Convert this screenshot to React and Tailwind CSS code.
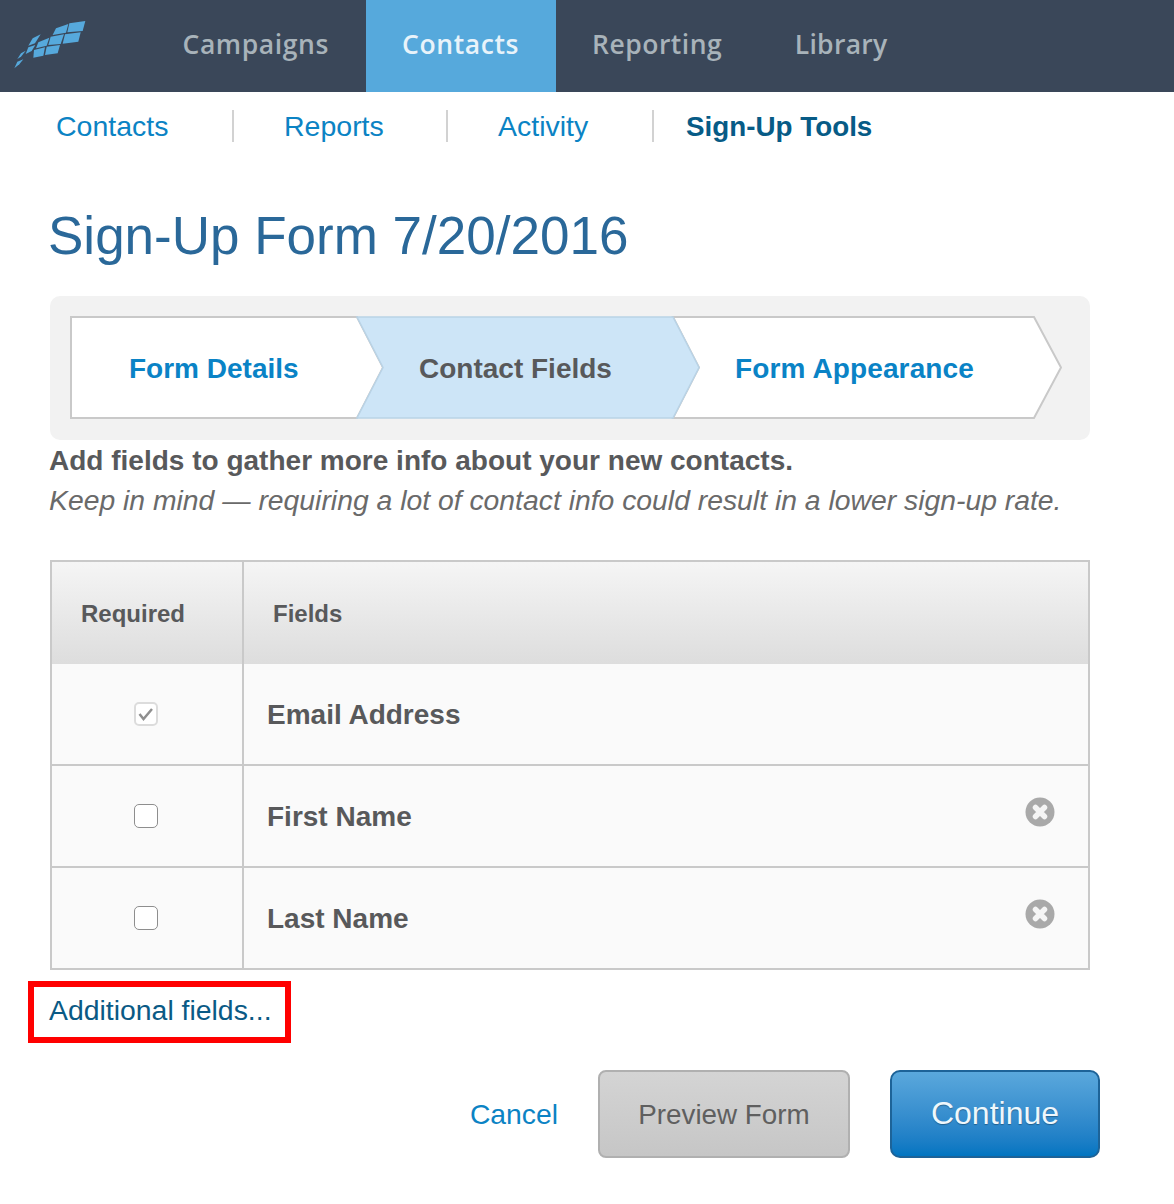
import React from 'react';

const navItems = [
  { name: 'Campaigns', active: false, cls: 'px-[36.5px] tracking-[0.6px]' },
  { name: 'Contacts', active: true, cls: 'px-[36.5px] tracking-[0.6px]' },
  { name: 'Reporting', active: false, cls: 'px-[36.5px] tracking-[0.5px]' },
  { name: 'Library', active: false, cls: 'pl-[36px] pr-[36.5px] tracking-[0.3px]' },
];

const subItems = [
  { name: 'Contacts', width: 'w-[234px]', pad: 'pl-[56px]' },
  { name: 'Reports', width: 'w-[214px]', pad: 'pl-[50px]' },
  { name: 'Activity', width: 'w-[206px]', pad: 'pl-[50px]' },
];

const rows = [
  { name: 'Email Address', checked: true },
  { name: 'First Name' },
  { name: 'Last Name' },
];

const Logo = () => (
  <svg width="80" height="60" viewBox="0 0 240 180" fill="#56a9dc">
    <path d="M178 25 L226 18 L218 48 L172 52 Z" />
    <path d="M138 40 L175 27 L168 53 L128 60 Z" />
    <path d="M165 58 L212 52 L205 80 L158 86 Z" />
    <path d="M122 65 L162 58 L152 87 L115 90 Z" />
    <path d="M110 95 L150 90 L143 115 L105 120 Z" />
    <path d="M85 82 L118 68 L110 92 L78 100 Z" />
    <path d="M72 105 L105 97 L100 122 L70 128 Z" />
    <path d="M68 70 L92 58 L75 85 L55 92 Z" />
    <path d="M55 97 L76 90 L65 108 L47 117 Z" />
    <path d="M33 115 L47 107 L33 125 L22 132 Z" />
    <path d="M22 140 L40 133 L28 148 L13 160 Z" />
  </svg>
);

const RemoveIcon = () => (
  <svg width="30" height="30" viewBox="0 0 30 30">
    <circle cx="15" cy="15" r="14.5" fill="#a9a9a9" />
    <path d="M10.5 10.5 L19.5 19.5 M19.5 10.5 L10.5 19.5" stroke="#f5f5f5" strokeWidth="5.5" strokeLinecap="round" />
  </svg>
);

const Checkbox = ({ checked }) => (
  <span className={`flex items-center justify-center w-6 h-6 rounded-[5px] bg-white ${checked ? 'border-2 border-[#dcdcdc]' : 'border border-[#8e8e8e]'}`}>
    {checked && (
      <svg width="20" height="20" viewBox="0 0 20 20" fill="none">
        <path d="M3.5 10 L7.5 15 L16 5" stroke="#8f8f8f" strokeWidth="2.5" />
      </svg>
    )}
  </span>
);

const Stepper = () => (
  <div className="relative w-[992px] h-[104px]">
    <svg className="absolute inset-0" width="992" height="104" viewBox="0 0 992 104">
      <path d="M1 1 H287 L313 51.5 L287 102 H1 Z" fill="#fff" stroke="#c9c9c9" strokeWidth="2" />
      <path d="M603 1 H964 L991 51.5 L964 102 H603 L629 51.5 Z" fill="#fff" stroke="#c9c9c9" strokeWidth="2" />
      <path d="M287 1 H603 L629 51.5 L603 102 H287 L313 51.5 Z" fill="#cde5f7" stroke="#b9d3e6" strokeWidth="1.5" />
    </svg>
    <div className="relative flex items-center h-full pt-[2px] text-[28px] font-bold">
      <span className="pl-[59px] w-[349px] text-[#0a83c6]">Form Details</span>
      <span className="w-[316px] text-[#58595b]">Contact Fields</span>
      <span className="tracking-[0.13px] text-[#0a83c6]">Form Appearance</span>
    </div>
  </div>
);

export default function App() {
  return (
    <div className="w-[1174px] h-[1204px] bg-white overflow-hidden font-['Liberation_Sans',Arial,sans-serif]">
      <header className="flex h-[92px] bg-[#3a4759]">
        <div className="w-[146px] pl-[10px] pt-[15px]">
          <Logo />
        </div>
        {navItems.map((item) => (
          <div
            key={item.name}
            className={`flex items-center pb-[2px] text-[26.5px] font-semibold font-['Open_Sans',sans-serif] ${item.cls} ${item.active ? 'bg-[#56a9dc] text-[#e8f3fa]' : 'text-[#a8b3ba]'}`}
          >
            {item.name}
          </div>
        ))}
      </header>

      <nav className="flex items-center h-[70px] pb-[2px] text-[28.5px]">
        {subItems.map((item) => (
          <div key={item.name} className={`${item.width} ${item.pad} border-r-2 border-[#d2d2d2] text-[#0b83c4] leading-[32px]`}>
            {item.name}
          </div>
        ))}
        <div className="pl-[32px] pt-[2px] text-[27.8px] leading-[32px] font-bold text-[#075b86]">Sign-Up Tools</div>
      </nav>

      <h1 className="pl-[48px] mt-[40px] text-[53px] leading-[68px] text-[#2a6899]">Sign-Up Form 7/20/2016</h1>

      <div className="flex items-center ml-[50px] mt-[26px] w-[1040px] h-[144px] px-[20px] rounded-[10px] bg-[#f2f2f2]">
        <Stepper />
      </div>

      <div className="pl-[49px] pt-[1px] text-[#58595b]">
        <p className="text-[28.03px] leading-[40px] font-bold">Add fields to gather more info about your new contacts.</p>
        <p className="-mt-[1px] pb-[1px] text-[28.33px] leading-[40px] italic text-[#6a6a6a]">Keep in mind — requiring a lot of contact info could result in a lower sign-up rate.</p>
      </div>

      <div className="ml-[50px] mt-[39px] w-[1040px] border-2 border-[#c9c9c9] text-[#58595b]">
        <div className="flex h-[102px] bg-gradient-to-b from-[#f5f5f5] to-[#dddddd] text-[24px] font-bold">
          <div className="flex items-center w-[192px] pl-[29px] pt-[2px] border-r-2 border-[#c9c9c9]">Required</div>
          <div className="flex items-center pl-[29px] pt-[2px]">Fields</div>
        </div>
        {rows.map((row, i) => (
          <div key={row.name} className={`flex bg-[#fafafa] text-[28px] font-bold ${i > 0 ? 'h-[102px] border-t-2 border-[#c9c9c9]' : 'h-[100px]'}`}>
            <div className="flex items-center justify-center w-[192px] pr-[2px] border-r-2 border-[#c9c9c9]">
              <Checkbox checked={row.checked} />
            </div>
            <div className="flex flex-1 items-center justify-between pl-[23px] pr-[33px]">
              <span className="mt-[2px]">{row.name}</span>
              {!row.checked && <span className="-mt-[8px]"><RemoveIcon /></span>}
            </div>
          </div>
        ))}
      </div>

      <div className="ml-[28px] mt-[11px] w-[263px] h-[62px] pl-[15px] pb-[4px] flex items-center border-[6px] border-[#ff0000] text-[28.4px] text-[#0a5a85]">
        Additional fields...
      </div>

      <div className="flex items-center justify-end w-[1100px] mt-[27px]">
        <span className="mr-[40px] text-[28.3px] text-[#0b83c4]">Cancel</span>
        <button className="w-[252px] h-[88px] mr-[40px] pt-[2px] rounded-[8px] border-2 border-[#b0b0b0] bg-gradient-to-b from-[#d4d4d4] to-[#c6c6c6] text-[27.8px] text-[#5f5f5f]">Preview Form</button>
        <button className="w-[210px] h-[88px] pb-[2px] rounded-[10px] border-2 border-[#1d6398] bg-gradient-to-b from-[#5aa8dc] to-[#0075c1] text-[32px] text-[#eef7fc] [text-shadow:0_1px_1px_rgba(0,0,0,0.3)]">Continue</button>
      </div>
    </div>
  );
}
